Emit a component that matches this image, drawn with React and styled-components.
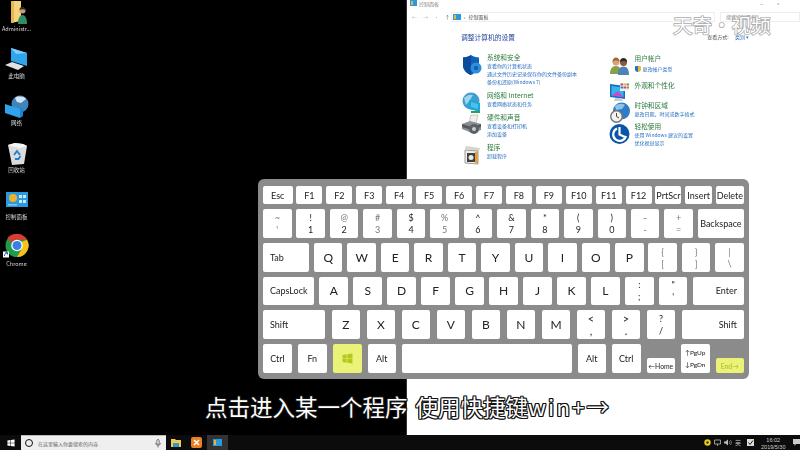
import styled, { createGlobalStyle } from "styled-components";

const GlobalStyle = createGlobalStyle`
  html, body {
    margin: 0;
    padding: 0;
    background: #000;
  }
`;

const CJK = `"Noto Sans CJK SC", "Noto Sans", sans-serif`;

const ROWS = [
  {
    height: 18,
    keys: [
      { label: "Esc", w: 29.5 },
      ...["F1", "F2", "F3", "F4", "F5", "F6", "F7", "F8", "F9", "F10", "F11", "F12", "PrtScr"].map((label) => ({ label, w: 26 })),
      { label: "Insert", w: 26.5 },
      { label: "Delete", w: 28 },
    ],
  },
  {
    keys: [
      { top: "~", bottom: "'", faint: true },
      { top: "!", bottom: "1" },
      { top: "@", bottom: "2", faint: true },
      { top: "#", bottom: "3", faint: true },
      { top: "$", bottom: "4" },
      { top: "%", bottom: "5", faint: true },
      { top: "^", bottom: "6" },
      { top: "&", bottom: "7" },
      { top: "*", bottom: "8" },
      { top: "(", bottom: "9" },
      { top: ")", bottom: "0" },
      { top: "–", bottom: "-", faint: true },
      { top: "+", bottom: "=", faint: true },
      { label: "Backspace", w: 46 },
    ],
  },
  {
    keys: [
      { label: "Tab", w: 46, align: "left" },
      ..."QWERTYUIOP".split("").map((c) => ({ label: c, big: true })),
      { top: "{", bottom: "[", faint: true },
      { top: "}", bottom: "]", faint: true },
      { top: "|", bottom: "\\", faint: true },
    ],
  },
  {
    keys: [
      { label: "CapsLock", w: 51, align: "left" },
      ..."ASDFGHJKL".split("").map((c) => ({ label: c, big: true })),
      { top: ":", bottom: ";" },
      { top: "\"", bottom: "'" },
      { label: "Enter", w: 51, align: "right" },
    ],
  },
  {
    keys: [
      { label: "Shift", w: 62, align: "left" },
      ..."ZXCVBNM".split("").map((c) => ({ label: c, big: true })),
      { top: "<", bottom: ",", large: true },
      { top: ">", bottom: ".", large: true },
      { top: "?", bottom: "/" },
      { label: "Shift", w: 62, align: "right" },
    ],
  },
  {
    keys: [
      { label: "Ctrl", w: 29 },
      { label: "Fn" },
      { win: true, w: 29 },
      { label: "Alt" },
      { label: "", w: 169.5 },
      { label: "Alt" },
      { label: "Ctrl" },
      { label: "←Home", half: true, tiny: true },
      { top: "↑PgUp", bottom: "↓PgDn", tiny: true },
      { label: "End→", half: true, tiny: true, lit: true },
    ],
  },
];

const LEFT_CATEGORIES = [
  { icon: "shield", title: "系统和安全", links: ["查看你的计算机状态", "通过文件历史记录保存你的文件备份副本", "备份和还原(Windows 7)"] },
  { icon: "network", title: "网络和 Internet", links: ["查看网络状态和任务"] },
  { icon: "printer", title: "硬件和声音", links: ["查看设备和打印机", "添加设备"] },
  { icon: "programs", title: "程序", links: ["卸载程序"] },
];

const RIGHT_CATEGORIES = [
  { icon: "users", title: "用户帐户", links: ["更改帐户类型"], badge: true, top: 55 },
  { icon: "display", title: "外观和个性化", links: [], top: 8.5 },
  { icon: "clock", title: "时钟和区域", links: ["更改日期、时间或数字格式"], top: 11 },
  { icon: "ease", title: "轻松使用", links: ["使用 Windows 建议的设置", "优化视觉显示"], top: 4 },
];

const WinLogo = ({ size = 10, color = "#fff" }) => (
  <svg width={size} height={size} viewBox="0 0 20 20">
    <path fill={color} d="M1 3.5 8.5 2.4v7H1zM9.7 2.2 19 1v8.4H9.7zM1 10.6h7.5v7L1 16.5zM9.7 10.6H19V19l-9.3-1.3z" />
  </svg>
);

const CategoryIcon = ({ name }) => {
  if (name === "shield") {
    return (
      <svg width="22" height="22" viewBox="0 0 22 22">
        <path fill="#0f62b8" d="M10 1c2 1.600 5 2.500 8 2.500V11c0 4.500-3.500 8-8 10C5 19 2 15.500 2 11V3.500C5 3.500 8 2.600 10 1z" />
        <path fill="#0a4c9a" d="M10 1v20C5 19 2 15.500 2 11V3.500C5 3.500 8 2.600 10 1z" />
        <circle cx="15" cy="14" r="5.500" fill="#2f8fd8" />
        <circle cx="15" cy="14" r="2.200" fill="#0f62b8" />
      </svg>
    );
  }
  if (name === "network") {
    return (
      <svg width="22" height="22" viewBox="0 0 22 22">
        <circle cx="10" cy="9" r="8.500" fill="#3d9fd0" />
        <path fill="#9fd6ea" d="M3 6c3-3 6-4 9-3L9 8 5 13z" />
        <path fill="#18a8dc" d="M8 8l11 3v9L8 17z" />
        <path fill="#4bc0e8" d="M10 10l7 2v5l-7-2z" />
        <rect x="10" y="19" width="9" height="2" fill="#3a9a50" />
      </svg>
    );
  }
  if (name === "printer") {
    return (
      <svg width="22" height="22" viewBox="0 0 22 22">
        <path fill="#eee" stroke="#aaa" strokeWidth=".6" d="M10 1h7l-2 8H8z" />
        <path fill="#8b8f94" d="M1 10l8-3 11 3v6l-9 3-10-4z" />
        <path fill="#55595e" d="M1 10l10 3 9-3v3l-9 3-10-3z" />
        <circle cx="13" cy="15" r="5" fill="#5d6165" />
        <circle cx="13" cy="15" r="2" fill="#c9ccd0" />
      </svg>
    );
  }
  if (name === "programs") {
    return (
      <svg width="22" height="22" viewBox="0 0 22 22">
        <path fill="#d7d4cc" d="M5 2l14 2-1 3L4 5z" />
        <path fill="#f1efe9" stroke="#777" strokeWidth=".7" d="M4 6l13 1v13l-13-1z" />
        <rect x="6" y="9" width="8" height="9" fill="#3d4045" />
        <circle cx="10" cy="13.500" r="2.500" fill="#e8e8e8" />
        <rect x="14" y="8" width="3" height="11" fill="#e0a33a" />
      </svg>
    );
  }
  if (name === "users") {
    return (
      <svg width="22" height="22" viewBox="0 0 22 22">
        <circle cx="7" cy="7" r="3.500" fill="#d9a27a" />
        <path fill="#a5652f" d="M3.500 7c0-3 1.500-4.500 3.500-4.500S10.500 4 10.500 7C9 5 5 5 3.500 7z" />
        <path fill="#8a9f4a" d="M1 19c0-5 2-8 6-8s5 3 5 8z" />
        <circle cx="14.500" cy="7.500" r="3.500" fill="#8a5a3c" />
        <path fill="#2a2a2a" d="M11 7c0-3 1.500-4 3.500-4S18 4 18 7c-2-1.500-5-1.500-7 0z" />
        <path fill="#4d83b5" d="M9 20c0-5 1.500-8.500 5.500-8.500S20 15 20 20z" />
      </svg>
    );
  }
  if (name === "display") {
    return (
      <svg width="22" height="22" viewBox="0 0 22 22">
        <path fill="#1b6fc2" d="M1 2l15 2v13L1 15z" />
        <path fill="#2fb8e8" d="M2.500 4l12 1.500V15l-12-1.500z" />
        <path fill="#c64bc9" d="M2.500 13.500 9 9l5.500 6z" />
        <rect x="11" y="1" width="9" height="8" fill="#f0f0f0" />
        <rect x="11.500" y="1.500" width="2.500" height="2" fill="#d8483c" />
        <rect x="14.500" y="1.500" width="2.500" height="2" fill="#e8b83c" />
        <rect x="17.500" y="1.500" width="2.500" height="2" fill="#58a84a" />
        <rect x="11.500" y="4.500" width="2.500" height="2" fill="#3a7fd0" />
        <rect x="14.500" y="4.500" width="2.500" height="2" fill="#a84ab8" />
        <rect x="17.500" y="4.500" width="2.500" height="2" fill="#e07038" />
        <path fill="#c9ccd0" d="M6 16h6l2 3H5z" />
      </svg>
    );
  }
  if (name === "clock") {
    return (
      <svg width="22" height="22" viewBox="0 0 22 22">
        <circle cx="12.500" cy="9" r="8.500" fill="#2f7cc4" />
        <path fill="#8cc4e8" d="M6 4c3-2.500 7-3 10-1l-3 4-6 1z" />
        <circle cx="7.500" cy="14.500" r="6.500" fill="#777" />
        <circle cx="7.500" cy="14.500" r="5" fill="#f3f3f3" />
        <path stroke="#333" strokeWidth=".9" fill="none" d="M7.500 11v3.500l2.500 1.500" />
      </svg>
    );
  }
  return (
    <svg width="22" height="22" viewBox="0 0 22 22">
      <circle cx="10.500" cy="11" r="10" fill="#0a55a8" />
      <path fill="none" stroke="#fff" strokeWidth="2.200" d="M8 5.500A6.500 6.500 0 1 0 17 13" />
      <path fill="none" stroke="#fff" strokeWidth="2.200" d="M10.500 4v7.500l5.500 2.500" />
    </svg>
  );
};

const DesktopIcon = ({ name }) => {
  if (name === "admin") {
    return (
      <svg width="24" height="24" viewBox="0 0 24 24">
        <path fill="#f5d37c" d="M6 0h10v20l-10 2z" />
        <path fill="#e4b74f" d="M6 0h3v21.500L6 22z" />
        <circle cx="17.500" cy="9.500" r="3" fill="#c99a78" />
        <path fill="#2a2a2a" d="M14.500 9c0-2.500 1.500-3 3-3s3 1 3 3c-2-1-4-1-6 0z" />
        <path fill="#2f8f62" d="M13 23c0-6 2-9 4.500-9s4.500 3 4.500 9z" />
      </svg>
    );
  }
  if (name === "pc") {
    return (
      <svg width="24" height="24" viewBox="0 0 24 24">
        <path fill="#2ea4ec" d="M6 0l16 5v13L6 13z" />
        <path fill="#7dd0f8" d="M6 0l16 5-11 1z" />
        <path fill="#dfe3e6" d="M0 17l7-3 12 4-6 4z" />
      </svg>
    );
  }
  if (name === "net") {
    return (
      <svg width="24" height="24" viewBox="0 0 24 24">
        <circle cx="15" cy="9" r="8.500" fill="#3f84bd" />
        <path fill="#d5e4ee" d="M10 3c3-2 8-2 11 1l-5 4-4-1z" />
        <path fill="#2ea4ec" d="M0 9l15 5v9L0 18z" />
        <path fill="#1b83cf" d="M15 14l3-1v8l-3 2z" />
      </svg>
    );
  }
  if (name === "bin") {
    return (
      <svg width="24" height="24" viewBox="0 0 24 24">
        <path fill="#dcdcdc" d="M3 3l7-2 8 1 4 2-3 18-12 1z" />
        <path fill="#f6f6f6" d="M3 3l7-2 8 1 4 2-8 2z" />
        <path fill="none" stroke="#1f7fd0" strokeWidth="1.800" d="M9 13l3-4 3 4M15.500 14l-2 3H10" />
      </svg>
    );
  }
  if (name === "panel") {
    return (
      <svg width="24" height="24" viewBox="0 0 24 24">
        <rect x="1" y="3" width="22" height="15" fill="#2a9ae0" />
        <circle cx="8" cy="9" r="4" fill="#f0b030" />
        <path fill="#cfe8f8" d="M14 6h3v3h-3zM18 6h3v3h-3zM14 11h3v3h-3zM18 11h3v3h-3z" />
        <path fill="#7ec6ee" d="M3 15h9v1.500H3z" />
      </svg>
    );
  }
  return (
    <svg width="24" height="24" viewBox="0 0 48 48" style={{ overflow: "visible" }}>
      <g transform="translate(0 -5)">
        <circle cx="24" cy="24" r="23" fill="#1f9b4c" />
        <path fill="#fbc116" d="M44 12.500A23 23 0 0 1 24 47l9-15.500-1-14.500z" />
        <path fill="#de3a2f" d="M24 1a23 23 0 0 1 20 11.500H24a11.500 11.500 0 0 0-10.500 7L5 8.500A23 23 0 0 1 24 1z" />
        <circle cx="24" cy="24" r="11.500" fill="#fff" />
        <circle cx="24" cy="24" r="9" fill="#3b7fe6" />
        <rect x="-4" y="36" width="12" height="12" fill="#fff" />
        <path fill="none" stroke="#1a5fc0" strokeWidth="2" d="M-1 45c0-4 2-6 5-6M1 38h4v4" />
      </g>
    </svg>
  );
};

const Key = ({ k }) => (
  <KeyCap $w={k.w} $half={k.half} $lit={k.lit || k.win} $align={k.align}>
    {k.win && <WinLogo size={11} color="#b4c81c" />}
    {k.label !== undefined && (
      <KeyLabel $big={k.big} $tiny={k.tiny} $lit={k.lit}>
        {k.label}
      </KeyLabel>
    )}
    {k.top && (
      <KeyStack $tiny={k.tiny}>
        <KeySymbol $faint={k.faint} $large={k.large} $tiny={k.tiny}>{k.top}</KeySymbol>
        <KeySymbol $faint={k.faint && k.bottom !== "2"} $tiny={k.tiny} $large={k.large}>{k.bottom}</KeySymbol>
      </KeyStack>
    )}
  </KeyCap>
);

const Category = ({ icon, title, links, badge, top }) => (
  <CategoryRow $top={top}>
    <IconBox>
      <CategoryIcon name={icon} />
    </IconBox>
    <div>
      <CategoryTitle>{title}</CategoryTitle>
      {links.map((link) => (
        <CategoryLink key={link} $badge={badge}>
          {badge && <ShieldBadge />}
          {link}
        </CategoryLink>
      ))}
    </div>
  </CategoryRow>
);

const App = () => {
  const desktop = [
    ["admin", "Administr..."],
    ["pc", "此电脑"],
    ["net", "网络"],
    ["bin", "回收站"],
    ["panel", "控制面板"],
    ["chrome", "Chrome"],
  ];

  return (
    <>
      <GlobalStyle />
      <Page>
        <Main>
          <Desktop>
            {desktop.map(([icon, label]) => (
              <DesktopItem key={icon}>
                <DesktopIcon name={icon} />
                <DesktopLabel>{label}</DesktopLabel>
              </DesktopItem>
            ))}
          </Desktop>

          <Window>
            <TitleBar>
              <TitleLeft>
                <TinyPanel $w={7} />
                <span>控制面板</span>
              </TitleLeft>
              <WindowControls>
                <span>–</span>
                <span>▫</span>
                <span />
              </WindowControls>
            </TitleBar>
            <AddressRow>
              <NavArrows>
                <span>←</span>
                <span>→</span>
                <span>·</span>
                <span>↑</span>
              </NavArrows>
              <AddressBar>
                <TinyPanel $w={8} />
                <span>›</span>
                <span>控制面板</span>
              </AddressBar>
              <SearchBar>搜索控制面板</SearchBar>
            </AddressRow>
            <Heading>
              <h1>调整计算机的设置</h1>
              <ViewMode>
                查看方式: <b>类别 ▾</b>
              </ViewMode>
            </Heading>
            <Columns>
              <Column $gap={5}>
                {LEFT_CATEGORIES.map((c) => (
                  <Category key={c.title} {...c} />
                ))}
              </Column>
              <RightColumn>
                {RIGHT_CATEGORIES.map((c) => (
                  <Category key={c.title} {...c} />
                ))}
              </RightColumn>
            </Columns>
          </Window>
        </Main>

        <Taskbar>
          <StartButton>
            <WinLogo size={8} />
          </StartButton>
          <SearchBox>
            <Cortana />
            <SearchHint>在这里输入你要搜索的内容</SearchHint>
            <svg width="6" height="9" viewBox="0 0 6 9">
              <rect x="1.800" y="0.500" width="2.400" height="5" rx="1.200" fill="none" stroke="#555" strokeWidth=".8" />
              <path fill="none" stroke="#555" strokeWidth=".8" d="M.6 4c0 3 4.800 3 4.800 0M3 6.500V8.500" />
            </svg>
          </SearchBox>
          <TaskItem>
            <svg width="10" height="9" viewBox="0 0 10 9">
              <path fill="#f3c94f" d="M0 1h4l1 1h5v7H0z" />
              <rect x="2" y="5" width="6" height="4" fill="#2b9bd8" />
            </svg>
          </TaskItem>
          <TaskItem>
            <svg width="11" height="11" viewBox="0 0 11 11">
              <rect width="11" height="11" rx="2" fill="#ea7e23" />
              <path stroke="#fff" strokeWidth="1.500" d="M3 3l5 5M8 3l-5 5" />
            </svg>
          </TaskItem>
          <TaskItem $active>
            <TinyPanel $w={9} />
          </TaskItem>
          <Tray>
            <svg width="7" height="7" viewBox="0 0 7 7">
              <circle cx="3.500" cy="3.500" r="3.200" fill="#e4d01c" />
              <circle cx="3.500" cy="3.500" r="1.200" fill="#333" />
            </svg>
            <svg width="7" height="7" viewBox="0 0 7 7">
              <path fill="none" stroke="#bbb" strokeWidth=".8" d="M.5 1h6v4h-6zM3.500 5v2" />
            </svg>
            <svg width="8" height="7" viewBox="0 0 8 7">
              <path fill="#bbb" d="M0 2.500h1.500L4 .5v6L1.500 4.500H0z" />
              <path fill="none" stroke="#bbb" strokeWidth=".6" d="M5 2c1 1 1 2 0 3M6.300 1c1.500 1.500 1.500 3.500 0 5" />
            </svg>
            <ImeGlyph>英</ImeGlyph>
            <svg width="7" height="7" viewBox="0 0 7 7">
              <rect width="7" height="7" fill="#ddd" />
              <path fill="none" stroke="#222" strokeWidth="1" d="M1.500 3.500l1.500 2L6 1.500" />
            </svg>
            <Clock>
              <span>16:02</span>
              <span>2019/5/30</span>
            </Clock>
            <svg width="7" height="7" viewBox="0 0 7 7">
              <path fill="#ccc" d="M0 0h7v5H3L1.500 7V5H0z" />
            </svg>
          </Tray>
        </Taskbar>

        <Keyboard>
          {ROWS.map((row, i) => (
            <KeyRow key={i} $height={row.height}>
              {row.keys.map((k, j) => (
                <Key key={j} k={k} />
              ))}
            </KeyRow>
          ))}
        </Keyboard>

        <Caption>
          点击进入某一个程序 使用快捷键<CaptionLatin>win+→</CaptionLatin>
        </Caption>
        <Watermark>天奇·视频</Watermark>
      </Page>
    </>
  );
};

export default App;

const Page = styled.div`
  position: relative;
  width: 800px;
  height: 450px;
  display: flex;
  flex-direction: column;
  overflow: hidden;
  background: #000;
  font-family: ${CJK};
`;

const Main = styled.div`
  flex: 1;
  display: flex;
  min-height: 0;
`;

const Desktop = styled.div`
  width: 406px;
  padding-top: 1px;
  box-sizing: border-box;
  background: #000;
  filter: blur(0.35px);
`;

const DesktopItem = styled.div`
  width: 33px;
  height: 47px;
  display: flex;
  flex-direction: column;
  align-items: center;
`;

const DesktopLabel = styled.div`
  height: 8px;
  font-size: 5.5px;
  line-height: 8px;
  color: #d8d8d8;
  white-space: nowrap;
`;

const Window = styled.div`
  flex: 1;
  background: #fff;
  border-left: 1px solid #333;
  position: relative;
  color: #333;
  filter: blur(0.3px);
`;

const TitleBar = styled.div`
  height: 6px;
  display: flex;
  align-items: center;
  justify-content: space-between;
  padding: 0 0 0 3px;
  font-size: 5px;
  color: #888;
`;

const TitleLeft = styled.div`
  display: flex;
  align-items: center;
  gap: 2px;
`;

const WindowControls = styled.div`
  display: flex;
  gap: 12px;
  width: 40px;
  color: #888;
  font-size: 6px;
`;

const TinyPanel = styled.span`
  display: block;
  width: ${(p) => p.$w}px;
  height: ${(p) => p.$w * 0.75}px;
  background: linear-gradient(90deg, #f0b030 0 35%, #2a9ae0 35%);
  border: 1px solid #2a9ae0;
  box-sizing: border-box;
`;

const AddressRow = styled.div`
  height: 11px;
  margin-top: 5px;
  display: flex;
  align-items: center;
`;

const NavArrows = styled.div`
  width: 44px;
  padding-left: 5px;
  box-sizing: border-box;
  display: flex;
  gap: 6px;
  font-size: 5px;
  color: #aaa;

  span:last-child {
    color: #555;
  }
`;

const AddressBar = styled.div`
  width: 264px;
  height: 10px;
  box-sizing: border-box;
  border: 1px solid #eee;
  display: flex;
  align-items: center;
  gap: 3px;
  padding-left: 1px;
  font-size: 5px;
  color: #555;
`;

const SearchBar = styled.div`
  flex: 1;
  height: 10px;
  margin-left: 5px;
  box-sizing: border-box;
  border: 1px solid #eee;
  padding-left: 5px;
  font-size: 5px;
  line-height: 8px;
  color: #888;
`;

const Heading = styled.div`
  margin-top: 9px;
  padding: 0 51px 0 54px;
  height: 11px;
  display: flex;
  justify-content: space-between;
  align-items: center;

  h1 {
    margin: 0;
    font-size: 6.75px;
    font-weight: 400;
    color: #1f3f9a;
  }
`;

const ViewMode = styled.div`
  font-size: 5px;
  color: #555;

  b {
    font-weight: 400;
    color: #2a6fc0;
    margin-left: 5px;
  }
`;

const Columns = styled.div`
  display: flex;
  margin-top: 11px;
  padding-left: 54px;
`;

const Column = styled.div`
  width: 147.5px;
  display: flex;
  flex-direction: column;
  gap: ${(p) => p.$gap}px;
`;

const RightColumn = styled.div`
  margin-top: -54px;
  display: flex;
  flex-direction: column;
`;

const CategoryRow = styled.div`
  display: flex;
  margin-top: ${(p) => p.$top || 0}px;
`;

const IconBox = styled.div`
  width: 26px;
  flex-shrink: 0;
  padding-top: 1px;
  height: 0;
`;

const CategoryTitle = styled.div`
  height: 9px;
  font-size: 6.7px;
  line-height: 8px;
  color: #2b7a3d;
  white-space: nowrap;
`;

const CategoryLink = styled.div`
  display: flex;
  align-items: center;
  gap: 2px;
  height: 8px;
  margin-top: ${(p) => (p.$badge ? "1.5px" : "0")};
  font-size: 5px;
  line-height: 8px;
  color: #2a6fc0;
  white-space: nowrap;
`;

const ShieldBadge = styled.span`
  width: 6px;
  height: 6px;
  border-radius: 1px 1px 3px 3px;
  background: linear-gradient(90deg, #2a6fc0 50%, #e8b83c 50%);
`;

const Taskbar = styled.div`
  height: 15px;
  flex-shrink: 0;
  display: flex;
  align-items: center;
  background: #0c0c0c;
`;

const StartButton = styled.div`
  width: 21px;
  display: flex;
  justify-content: center;
`;

const SearchBox = styled.div`
  width: 145px;
  height: 15px;
  box-sizing: border-box;
  padding: 0 5px 0 4px;
  display: flex;
  align-items: center;
  background: #efefef;
  border-top: 1px solid #bbb;
`;

const Cortana = styled.span`
  width: 8px;
  height: 8px;
  box-sizing: border-box;
  border-radius: 50%;
  border: 1.5px solid #111;
  margin-right: 5px;
`;

const SearchHint = styled.span`
  flex: 1;
  font-size: 5px;
  color: #666;
`;

const TaskItem = styled.div`
  width: 20.5px;
  height: 15px;
  display: flex;
  align-items: center;
  justify-content: center;
  background: ${(p) => (p.$active ? "#333" : "transparent")};
`;

const Tray = styled.div`
  margin-left: auto;
  padding-right: 0.5px;
  display: flex;
  align-items: center;
  gap: 3px;
`;

const ImeGlyph = styled.span`
  width: 6px;
  margin-right: 3px;
  font-size: 6px;
  color: #bbb;
`;

const Clock = styled.div`
  width: 32.5px;
  margin-top: 2px;
  display: flex;
  flex-direction: column;
  align-items: center;
  font-family: "Liberation Sans", sans-serif;
  font-size: 5.5px;
  line-height: 7px;
  color: #ccc;
`;

const Keyboard = styled.div`
  position: absolute;
  left: 258px;
  top: 179px;
  width: 491px;
  height: 200px;
  box-sizing: border-box;
  padding: 7px 5px 0;
  display: flex;
  flex-direction: column;
  gap: 5px;
  background: #8b8b8b;
  border-radius: 6px;
  font-family: Lato, "Open Sans", sans-serif;
  filter: blur(0.25px);
`;

const KeyRow = styled.div`
  height: ${(p) => p.$height || 28.75}px;
  display: flex;
  justify-content: space-between;
  align-items: flex-end;
`;

const KeyCap = styled.div`
  width: ${(p) => p.$w || 28.5}px;
  height: ${(p) => (p.$half ? "14.5px" : "100%")};
  flex-shrink: 0;
  box-sizing: border-box;
  padding: 0 ${(p) => (p.$align ? "7px" : "0")};
  display: flex;
  align-items: center;
  justify-content: ${(p) =>
    p.$align === "left" ? "flex-start" : p.$align === "right" ? "flex-end" : "center"};
  background: ${(p) => (p.$lit ? "#eaf278" : "#fff")};
  border-radius: 2px;
`;

const KeyLabel = styled.span`
  font-size: ${(p) => (p.$big ? "12px" : p.$tiny ? "6.8px" : "9px")};
  color: ${(p) => (p.$lit ? "#a9bb20" : "#222")};
  white-space: nowrap;
`;

const KeyStack = styled.div`
  display: flex;
  flex-direction: column;
  align-items: center;
  gap: 3px;
`;

const KeySymbol = styled.span`
  font-size: ${(p) => (p.$tiny ? "6.5px" : p.$large ? "11px" : "9px")};
  line-height: 9px;
  color: ${(p) => (p.$faint ? "#777" : "#222")};
  white-space: nowrap;
`;

const Caption = styled.div`
  position: absolute;
  left: 205px;
  top: 389px;
  font-family: ${CJK};
  font-size: 22.5px;
  line-height: 34px;
  word-spacing: 3px;
  color: #fff;
  white-space: nowrap;
  text-shadow:
    -1px -1px 0 #111, 0 -1px 0 #111, 1px -1px 0 #111,
    -1px 0 0 #111, 1px 0 0 #111,
    -1px 1px 0 #111, 0 1px 0 #111, 1px 1px 0 #111;
`;

const CaptionLatin = styled.span`
  letter-spacing: 2px;
`;

const Watermark = styled.div`
  position: absolute;
  left: 673px;
  top: 10px;
  font-family: ${CJK};
  font-size: 19.5px;
  line-height: 30px;
  color: #fff;
  white-space: nowrap;
  -webkit-text-stroke: 1.6px #aaa;
  paint-order: stroke fill;
`;
